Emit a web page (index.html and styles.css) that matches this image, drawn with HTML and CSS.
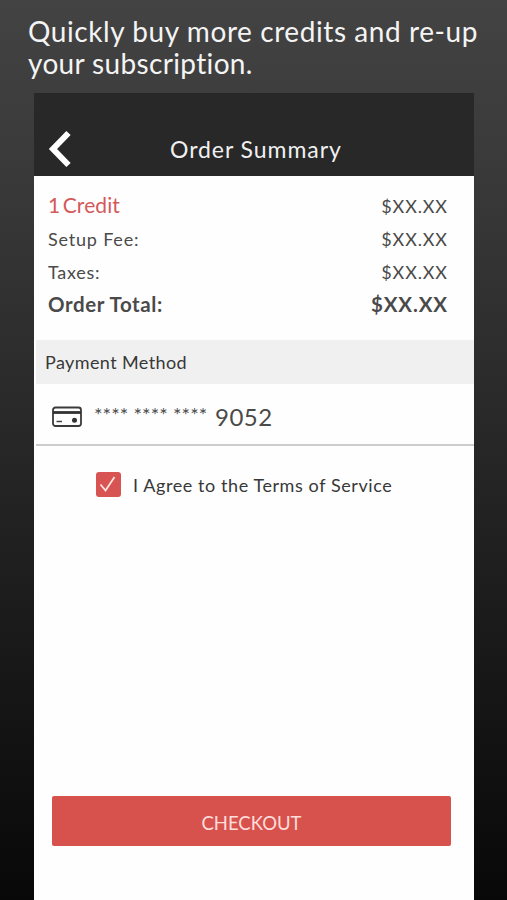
FILE: index.html
```html
<!DOCTYPE html>
<html lang="en">
<head>
<meta charset="utf-8">
<title>Order Summary</title>
<link rel="stylesheet" href="styles.css">
</head>
<body>
<h1 class="headline"><span class="headline-first">Quickly buy more credits and re-up</span><br><span class="headline-second">your subscription.</span></h1>
<main class="phone">
  <header class="bar">
    <svg class="back" viewBox="0 0 24 38" aria-hidden="true"><path d="M20.500 3 5 19l15.500 16"/></svg>
    <h2 class="bar-title">Order Summary</h2>
  </header>
  <section class="summary">
    <div class="row first"><span class="credit">1 Credit</span><span class="price">$XX.XX</span></div>
    <div class="row"><span class="fee">Setup Fee:</span><span class="price">$XX.XX</span></div>
    <div class="row"><span class="taxes">Taxes:</span><span class="price">$XX.XX</span></div>
    <div class="row total"><span class="total-label">Order Total:</span><span class="total-price">$XX.XX</span></div>
  </section>
  <h3 class="section-title"><span class="payment">Payment Method</span></h3>
  <div class="card">
    <svg class="card-icon" viewBox="0 0 30 22" aria-hidden="true">
      <rect class="outline" x="1" y="1.500" width="28" height="18.500" rx="2.500"/>
      <path class="stripe" d="M1 6.500h28"/>
      <path class="dash" d="M4.500 15.500h5.500"/>
      <circle cx="22.500" cy="14.300" r="2.500"/>
    </svg>
    <span class="stars">**** **** ****</span>
    <span class="digits">9052</span>
  </div>
  <div class="agree">
    <svg class="check" viewBox="0 0 25 25" aria-hidden="true"><rect width="25" height="25" rx="3"/><path d="M4.500 12.500 9.500 18.500 18.500 5"/></svg>
    <span class="terms">I Agree to the Terms of Service</span>
  </div>
  <button class="checkout"><span class="checkout-label">CHECKOUT</span></button>
</main>
</body>
</html>
```
FILE: styles.css
```css
* { box-sizing: border-box; }
body {
  margin: 0;
  height: 900px;
  overflow: hidden;
  padding: 16px 33px 0 34px;
  display: flex;
  flex-direction: column;
  background: linear-gradient(#434343, #3a3a3a 18%, #080808);
  font-family: Lato, "Liberation Sans", sans-serif;
  font-variant-ligatures: none;
  color: #4a4a4a;
}
h1, h2, h3 { margin: 0; font-weight: 400; }
.headline {
  height: 77px;
  margin-left: -6px;
  white-space: nowrap;
  font-size: 28px;
  line-height: 31.500px;
  letter-spacing: 0.580px;
  color: #f4f4f4;
}
.headline-second { letter-spacing: 0.350px; }
.phone {
  flex: 1;
  display: flex;
  flex-direction: column;
  background: #fefefe;
}
.bar {
  height: 82.500px;
  flex: none;
  display: flex;
  align-items: flex-end;
  background: #282828;
  color: #f0f0f0;
}
.back { width: 24px; height: 38px; margin: 0 0 8px 14px; }
.back path { fill: none; stroke: #fff; stroke-width: 6; }
.bar-title { margin-left: 98px; font-size: 23px; line-height: 30px; padding-bottom: 12px; letter-spacing: 0.950px; white-space: nowrap; }
.summary { padding: 14px 27px 0 14px; height: 164.500px; flex: none; }
.row {
  display: flex;
  justify-content: space-between;
  align-items: baseline;
  height: 33px;
  line-height: 33px;
  font-size: 18px;
  white-space: nowrap;
}
.first { height: 35px; margin-top: -2px; }
.credit { font-size: 21px; letter-spacing: 0.100px; word-spacing: -3px; color: #d4595b; }
.price { letter-spacing: 0.850px; margin-right: -0.850px; }
.fee { letter-spacing: 0.800px; }
.taxes { letter-spacing: 0.700px; }
.total { font-size: 20.500px; margin-top: -1px; }
.total-label { font-weight: 700; letter-spacing: 0.600px; }
.total-price { font-weight: 700; letter-spacing: 0.850px; margin-right: -0.850px; }
.section-title { height: 44px; flex: none; margin-left: 2px; padding-left: 9px; line-height: 45px; font-size: 18px; letter-spacing: 0.400px; background: #f0f0f0; color: #383838; }
.card { height: 62px; flex: none; margin-left: 2px; padding-left: 16px; display: flex; align-items: center; border-bottom: 2px solid #ccc; white-space: nowrap; }
.card-icon { width: 30px; height: 22px; margin-top: 6px; fill: #333; }
.card-icon .outline { fill: none; stroke: #3a3a3a; stroke-width: 1.800; }
.card-icon .stripe { stroke: #333; stroke-width: 2.800; }
.card-icon .dash { stroke: #444; stroke-width: 1.500; }
.stars { margin-left: 12px; width: 115px; font-size: 20px; letter-spacing: 0.080px; line-height: 30px; padding-bottom: 1px; }
.digits { margin-left: 6px; font-size: 24px; letter-spacing: 0.500px; line-height: 30px; padding-top: 5px; }
.agree { display: flex; align-items: center; height: 26px; flex: none; margin: 26px 0 0 62px; font-size: 18px; color: #383838; white-space: nowrap; }
.check { width: 25px; height: 25px; margin-top: -1px; }
.check rect { fill: #d75453; }
.check path { fill: none; stroke: #ffe4df; stroke-width: 1.800; }
.terms { margin-left: 12px; letter-spacing: 0.580px; }
.checkout { width: 399px; height: 50px; margin: auto 0 54px 18px; padding: 3px 0 0; border: 0; border-radius: 2px; background: #d8524d; color: #ffdedb; font: 18.500px/30px Lato, "Liberation Sans", sans-serif; }
```
